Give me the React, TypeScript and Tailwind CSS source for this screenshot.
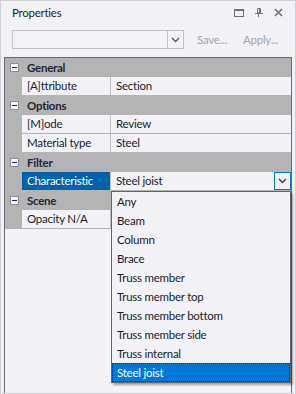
import React from "react";

const Chevron = ({ color = "#333" }: { color?: string }) => (
  <svg width="9" height="6" viewBox="0 0 9 6">
    <path d="M1 1 L4.5 4.5 L8 1" fill="none" stroke={color} strokeWidth="1.3" />
  </svg>
);

const Minus = () => (
  <div className="w-[9px] h-[9px] border border-[#8e8e96] bg-[#f7f7fa] flex items-center justify-center">
    <div className="w-[5px] h-[1px] bg-[#1e2a5a]" />
  </div>
);

const Category = ({ label }: { label: string }) => (
  <div className="h-[19px] flex bg-[#b4b4b4]">
    <div className="w-[17px] flex items-center justify-center pl-[2px]">
      <Minus />
    </div>
    <div className="flex items-center pl-[5px] font-bold text-[#262634]">{label}</div>
  </div>
);

const Prop = ({ name, value }: { name: string; value: string }) => (
  <div className="h-[19px] flex border-b border-[#b4b4b4]">
    <div className="w-[17px] bg-[#b4b4b4]" />
    <div className="w-[89px] flex items-center pl-[5px] border-r border-[#c0c0c4]">{name}</div>
    <div className="flex-1 flex items-center pl-[5px]">{value}</div>
  </div>
);

const items = [
  "Any",
  "Beam",
  "Column",
  "Brace",
  "Truss member",
  "Truss member top",
  "Truss member bottom",
  "Truss member side",
  "Truss internal",
  "Steel joist",
];

export default function App() {
  return (
    <div className="w-[296px] h-[394px] overflow-hidden bg-[#f2f2f7] border border-[#cfd0d8] flex flex-col font-['Lato',sans-serif] text-[11.5px] tracking-[-0.25px] text-[#1c1c2c]">
      {/* title */}
      <div className="h-[23px] flex items-center pl-[11px] pr-[12px]">
        <span className="text-[#1e1e1e]">Properties</span>
        <div className="ml-auto flex items-center gap-[11px]">
          <svg width="10" height="8" viewBox="0 0 10 8">
            <rect x="0.5" y="0.5" width="9" height="7" fill="none" stroke="#717171" />
            <rect x="0" y="0" width="10" height="2" fill="#717171" />
          </svg>
          <svg width="8" height="9" viewBox="0 0 8 9">
            <path d="M2.5 0.5 H5.5 V5 H2.5 Z" fill="none" stroke="#717171" />
            <path d="M4.5 1 V5" stroke="#717171" />
            <path d="M0 5.5 H8" stroke="#717171" />
            <path d="M3.5 6 V9" stroke="#717171" />
          </svg>
          <svg width="9" height="9" viewBox="0 0 9 9">
            <path d="M1 1 L8 8 M8 1 L1 8" stroke="#717171" strokeWidth="1.6" />
          </svg>
        </div>
      </div>
      {/* toolbar */}
      <div className="mt-[6px] flex items-center pl-[11px]">
        <div className="w-[172px] h-[19px] border border-[#c2c3c9] bg-[#f4f4f8] flex">
          <div className="flex-1" />
          <div className="w-[16px] border-l border-[#c2c3c9] flex items-center justify-center">
            <Chevron color="#555" />
          </div>
        </div>
        <span className="ml-[13px] text-[#a4a6ab]">Save...</span>
        <span className="ml-[16px] text-[#a4a6ab]">Apply...</span>
      </div>
      {/* grid */}
      <div className="mt-[8px] mx-[3px] flex-1 border-l border-t border-r border-[#6b6b70] flex flex-col">
        <Category label="General" />
        <Prop name="[A]ttribute" value="Section" />
        <Category label="Options" />
        <Prop name="[M]ode" value="Review" />
        <Prop name="Material type" value="Steel" />
        <Category label="Filter" />
        <div className="h-[19px] flex border-b border-[#b4b4b4]">
          <div className="w-[17px] bg-[#b4b4b4]" />
          <div className="w-[89px] flex items-center pl-[5px] bg-[#0062a9] text-white border-r border-[#c0c0c4]">
            Characteristic
          </div>
          <div className="flex-1 relative flex items-center pl-[5px]">
            <span>Steel joist</span>
            <div className="ml-auto w-[17px] h-[18px] border border-[#0078d7] flex items-center justify-center">
              <Chevron color="#333" />
            </div>
            <div className="absolute left-0 top-[19px] w-[180px] border border-[#646468] bg-[#f2f2f7] shadow-[2px_2px_2px_rgba(0,0,0,0.35)] z-10">
              {items.map((it, i) =>
                i === items.length - 1 ? (
                  <div
                    key={it}
                    className="h-[19px] flex items-center pl-[4px] bg-[#0078d7] text-white border border-dotted border-[#3a2a10]"
                  >
                    {it}
                  </div>
                ) : (
                  <div key={it} className="h-[19px] flex items-center pl-[5px]">
                    {it}
                  </div>
                )
              )}
            </div>
          </div>
        </div>
        <Category label="Scene" />
        <Prop name="Opacity N/A" value="" />
      </div>
    </div>
  );
}
